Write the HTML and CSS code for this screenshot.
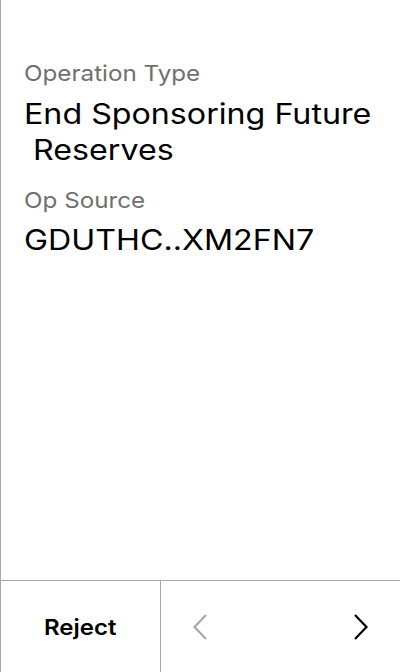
FILE: index.html
```html
<!DOCTYPE html>
<html>
<head>
<meta charset="utf-8">
<link rel="stylesheet" href="styles.css">
</head>
<body>
<div class="screen">
  <main class="content">
    <div class="label first"><span class="wide">Operation Type</span></div>
    <div class="value"><span class="wide">End Sponsoring Future<br>&nbsp;Reserves</span></div>
    <div class="label"><span class="wide">Op Source</span></div>
    <div class="value second"><span class="wide">GDUTHC..XM2FN7</span></div>
  </main>
  <footer class="footer">
    <div class="reject"><span class="wide">Reject</span></div>
    <div class="nav">
      <svg class="chev prev" width="14" height="26" viewBox="0 0 14 26"><path d="M13 1 L1.5 13 L13 25" fill="none" stroke="currentColor" stroke-width="2.2"/></svg>
      <svg class="chev next" width="14" height="26" viewBox="0 0 14 26"><path d="M1 1 L12.5 13 L1 25" fill="none" stroke="currentColor" stroke-width="2.2"/></svg>
    </div>
  </footer>
</div>
</body>
</html>
```
FILE: styles.css
```css
html, body {
  margin: 0;
  padding: 0;
  background: #fff;
}
.screen {
  width: 400px;
  height: 672px;
  box-sizing: border-box;
  border-left: 1px solid #a8a8a8;
  display: flex;
  flex-direction: column;
  font-family: Inter, "Noto Sans", sans-serif;
}
.content {
  flex: 1;
  padding: 0 0 0 23px;
}
.wide {
  display: inline-block;
  transform-origin: left center;
}
.label {
  font-size: 22px;
  line-height: 32px;
  color: #6f6f6f;
  margin-top: 16px;
}
.label .wide {
  transform: scaleX(1.1);
}
.label.first {
  margin-top: 57px;
}
.value {
  font-size: 28px;
  line-height: 36px;
  color: #000;
  margin-top: 7px;
}
.value .wide {
  transform: scaleX(1.15);
}
.value.second {
  margin-top: 6px;
}
.footer {
  height: 92px;
  border-top: 1px solid #a8a8a8;
  box-sizing: border-box;
  display: flex;
}
.reject {
  width: 159px;
  border-right: 1px solid #a8a8a8;
  display: flex;
  align-items: center;
  justify-content: center;
  font-size: 22px;
  font-weight: 600;
  color: #000;
}
.reject .wide {
  transform-origin: center;
  transform: scaleX(1.09);
}
.nav {
  flex: 1;
  display: flex;
  align-items: center;
  justify-content: space-between;
  padding: 0 32px 0 32px;
}
.chev.prev { color: #a8a8a8; }
.chev.next { color: #000; }
```
